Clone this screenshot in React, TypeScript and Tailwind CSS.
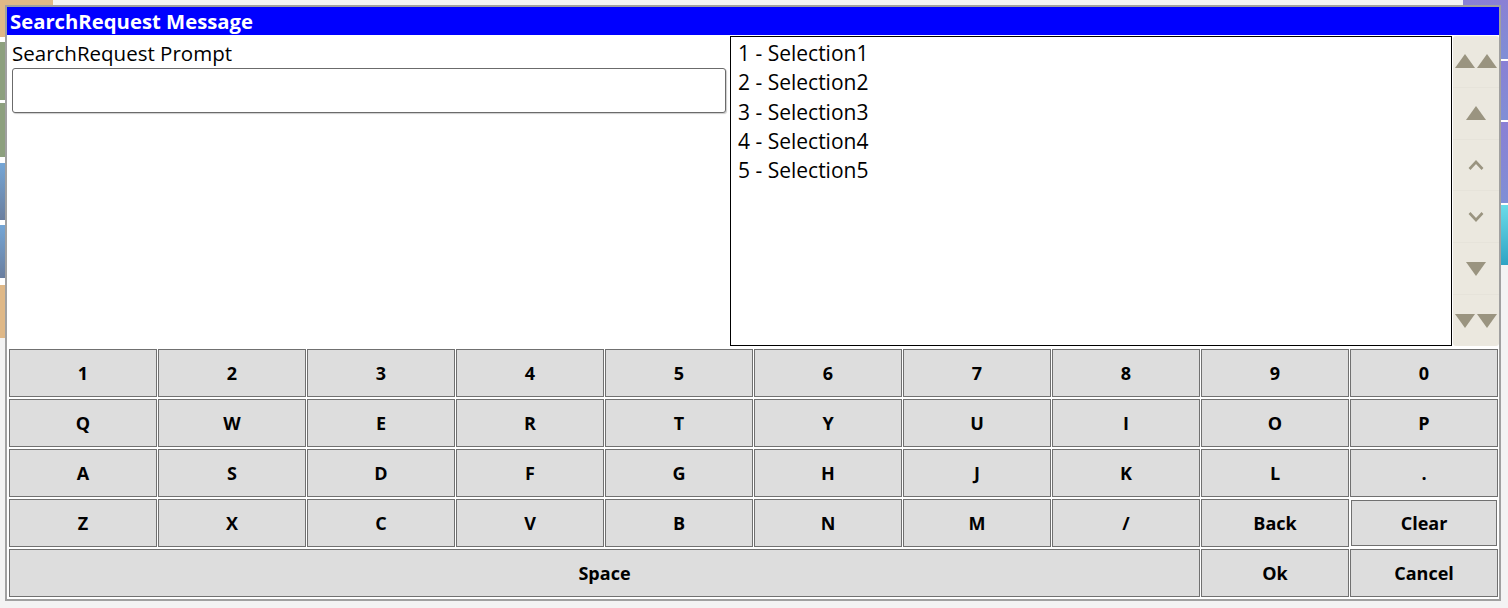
const ROWS = [
  ['1', '2', '3', '4', '5', '6', '7', '8', '9', '0'],
  ['Q', 'W', 'E', 'R', 'T', 'Y', 'U', 'I', 'O', 'P'],
  ['A', 'S', 'D', 'F', 'G', 'H', 'J', 'K', 'L', '.'],
  ['Z', 'X', 'C', 'V', 'B', 'N', 'M', '/', 'Back', 'Clear'],
];

const SELECTIONS = ['1 - Selection1', '2 - Selection2', '3 - Selection3', '4 - Selection4', '5 - Selection5'];

const ICON = '#9a9480';

function Tri({ down = false }: { down?: boolean }) {
  return (
    <svg width="20" height="14" viewBox="0 0 20 14">
      <polygon points={down ? '0,0 20,0 10,14' : '0,14 10,0 20,14'} fill={ICON} />
    </svg>
  );
}

function DoubleTri({ down = false }: { down?: boolean }) {
  return (
    <svg width="42" height="14" viewBox="0 0 42 14">
      <polygon points={down ? '0,0 20,0 10,14' : '0,14 10,0 20,14'} fill={ICON} />
      <polygon points={down ? '22,0 42,0 32,14' : '22,14 32,0 42,14'} fill={ICON} />
    </svg>
  );
}

function Chevron({ down = false }: { down?: boolean }) {
  return (
    <svg width="16" height="11" viewBox="0 0 16 11">
      <polyline
        points={down ? '1.5,2 8,9 14.5,2' : '1.5,9 8,2 14.5,9'}
        fill="none"
        stroke={ICON}
        strokeWidth="2.6"
      />
    </svg>
  );
}

function Key({ label, className = '' }: { label: string; className?: string }) {
  return (
    <button
      type="button"
      className={`flex items-center justify-center border border-[#707070] bg-[#dddddd] text-[18px] font-bold text-black ${className}`}
    >
      {label}
    </button>
  );
}

export default function App() {
  return (
    <div
      className="relative h-[608px] w-[1508px] overflow-hidden bg-[#f3f3f3]"
      style={{ fontFamily: '"Open Sans", "Noto Sans", sans-serif' }}
    >
      {/* desktop tiles behind the dialog */}
      <div className="flex h-full justify-between">
        <div className="flex w-[53px] flex-col self-start bg-white">
          <div className="h-[37px] bg-[#dfb887]" />
          <div className="mt-[5px] h-[58px] bg-[#8da07e]" />
          <div className="mt-[3px] h-[54px] bg-[#8da07e]" />
          <div className="mt-[6px] h-[57px] bg-gradient-to-b from-[#74a6d6] to-[#6a7e9e]" />
          <div className="mt-[5px] h-[53px] bg-gradient-to-b from-[#74a6d6] to-[#6a7e9e]" />
          <div className="mt-[7px] h-[53px] bg-[#dfb887]" />
        </div>
        <div className="flex w-[45px] flex-col self-start bg-white">
          <div className="h-[59px] bg-gradient-to-b from-[#8a80d4] to-[#7f8fd6]" />
          <div className="mt-[2px] h-[59px] bg-gradient-to-b from-[#8a80d4] to-[#7f8fd6]" />
          <div className="mt-[2px] h-[81px] bg-gradient-to-b from-[#8a80d4] to-[#7f8fd6]" />
          <div className="mt-[2px] h-[60px] bg-gradient-to-b from-[#6adbe8] to-[#2ea4c4]" />
        </div>
      </div>

      {/* the message window */}
      <div className="absolute left-[5px] top-[5px] flex h-[596px] w-[1496px] flex-col border-2 border-[#a0a0a0] bg-white">
        <div className="h-[28px] bg-[#0000ff] pl-[3px] text-[20.3px] font-bold leading-[28px] text-white">
          SearchRequest Message
        </div>

        <div className="flex h-[312px]">
          <div className="w-[723px] pl-[5px] pr-[4px] pt-[4px]">
            <div className="text-[20.5px] leading-[28px] text-black">SearchRequest Prompt</div>
            <input
              type="text"
              className="mt-px block h-[45px] w-full rounded-[3px] border border-[#6b6b6b] bg-white px-2 text-[20px] shadow-[1px_1px_1px_rgba(0,0,0,0.2)] outline-none"
            />
          </div>

          <div className="mt-px h-[310px] w-[722px] border border-black pl-[7px] pt-[2px] text-[21px] leading-[29.3px] text-black">
            {SELECTIONS.map((s) => (
              <div key={s}>{s}</div>
            ))}
          </div>

          <div className="ml-px mt-px flex h-[310px] w-[46px] flex-col rounded-[3px] bg-[#ebe8df]">
            <div className="flex flex-1 items-center justify-center border-b border-[#e6e3da]">
              <DoubleTri />
            </div>
            <div className="flex flex-1 items-center justify-center border-b border-[#e6e3da]">
              <Tri />
            </div>
            <div className="flex flex-1 items-center justify-center border-b border-[#e6e3da]">
              <Chevron />
            </div>
            <div className="flex flex-1 items-center justify-center border-b border-[#e6e3da]">
              <Chevron down />
            </div>
            <div className="flex flex-1 items-center justify-center border-b border-[#e6e3da]">
              <Tri down />
            </div>
            <div className="flex flex-1 items-center justify-center">
              <DoubleTri down />
            </div>
          </div>
        </div>

        <div className="grid grid-cols-10 grid-rows-[repeat(5,48px)] gap-x-px gap-y-[2px] pb-[2px] pl-[2px] pr-px pt-[2px]">
          {ROWS.flat().map((k) => (
            <Key key={k} label={k} className={k === 'Clear' ? 'm-px' : ''} />
          ))}
          <Key label="Space" className="col-span-8" />
          <Key label="Ok" />
          <Key label="Cancel" />
        </div>
      </div>
    </div>
  );
}
